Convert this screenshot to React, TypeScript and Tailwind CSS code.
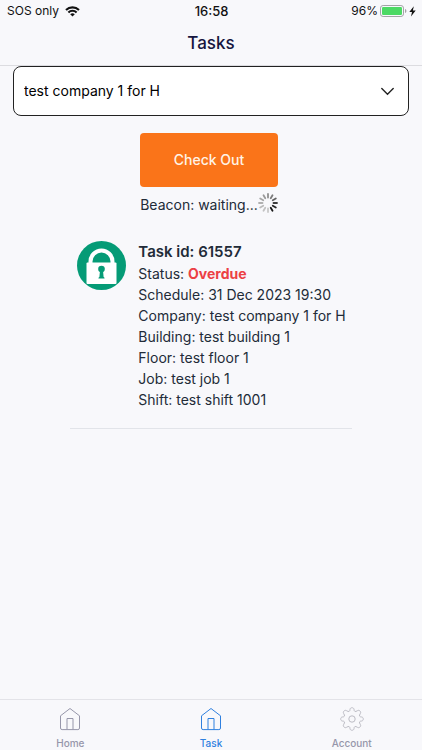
import type { ReactNode } from 'react'

interface Task {
  id: number
  status: string
  details: { label: string; value: string }[]
}

const companies = ['test company 1 for H']

const task: Task = {
  id: 61557,
  status: 'Overdue',
  details: [
    { label: 'Schedule', value: '31 Dec 2023 19:30' },
    { label: 'Company', value: 'test company 1 for H' },
    { label: 'Building', value: 'test building 1' },
    { label: 'Floor', value: 'test floor 1' },
    { label: 'Job', value: 'test job 1' },
    { label: 'Shift', value: 'test shift 1001' },
  ],
}

// Spoke colours, clockwise from the top.
const spokes = [
  '#8e8e8e', '#7c7c7c', '#626262', '#3c3c3c', '#242424', '#161616',
  '#c8c8c8', '#c2c2c2', '#bababa', '#b0b0b0', '#a6a6a6', '#9a9a9a',
]

function WifiIcon() {
  return (
    <svg width="15" height="11" viewBox="0 0 15 11" aria-hidden="true">
      <g fill="none" stroke="#111" strokeWidth="2.1">
        <path d="M1 4.1a9.2 9.2 0 0 1 13 0" />
        <path d="M3.4 6.5a5.8 5.8 0 0 1 8.2 0" />
      </g>
      <path d="M7.5 10.6 5.2 8.3a3.3 3.3 0 0 1 4.6 0z" fill="#111" />
    </svg>
  )
}

function BatteryIcon() {
  return (
    <svg width="27" height="12" viewBox="0 0 27 12" aria-hidden="true">
      <rect x="0.5" y="0.5" width="23" height="11" rx="2.6" fill="none" stroke="#a3a3a6" />
      <rect x="2" y="2" width="20" height="8" rx="1.2" fill="#4cd964" />
      <path d="M25 4v4c.9-.3 1.4-1.1 1.4-2S25.900 4.300 25 4z" fill="#a3a3a6" />
    </svg>
  )
}

function BoltIcon() {
  return (
    <svg width="7" height="11" viewBox="0 0 7 11" aria-hidden="true">
      <path d="M4.800.3.3 6h2.700L2 10.600 6.700 4.600H3.900z" fill="#111" />
    </svg>
  )
}

function Spinner() {
  return (
    <svg className="mb-1" width="20" height="20" viewBox="0 0 20 20" role="img" aria-label="Loading">
      {spokes.map((color, i) => (
        <line
          key={i}
          x1="10"
          y1="1"
          x2="10"
          y2="4.5"
          stroke={color}
          strokeWidth="1.8"
          strokeLinecap="round"
          transform={`rotate(${i * 30} 10 10)`}
        />
      ))}
    </svg>
  )
}

function LockIcon() {
  return (
    <svg className="shrink-0" width="49" height="49" viewBox="0 0 49 49" aria-hidden="true">
      <circle cx="24.5" cy="24.5" r="24.5" fill="#059b76" />
      <path d="M13.500 22.500v-2a11 11 0 0 1 22 0v2" fill="none" stroke="#fff" strokeWidth="4" />
      <rect x="9.500" y="21.500" width="30" height="21.500" rx="1" fill="#fff" />
      <circle cx="24.500" cy="28" r="3.300" fill="#059b76" />
      <path d="M23 29.500h3l.6 6.500q1 .3 1 1.500h-6.200q0-1.200 1-1.500z" fill="#059b76" />
    </svg>
  )
}

function HomeIcon() {
  return (
    <svg width="22" height="24" viewBox="0 0 22 24" fill="none" stroke="currentColor" aria-hidden="true">
      <path d="M1.500 8.800 11 1.500l9.500 7.300v12.200a1.600 1.600 0 0 1-1.600 1.600H3.100a1.600 1.600 0 0 1-1.600-1.600z" strokeLinejoin="round" />
      <path d="M8 22.500V11.500h6v11" />
    </svg>
  )
}

function GearIcon() {
  return (
    <svg width="24" height="24" viewBox="0 0 24 24" fill="none" stroke="#bcbcc4" strokeLinejoin="round" aria-hidden="true">
      <circle cx="12" cy="12" r="3.2" />
      <path d="M10 2.300C10.200 .2 13.800 .2 14 2.300C14.100 4.700 15.200 5.200 17.400 3.700C19.200 2.400 21.600 4.800 20.300 6.600C18.800 8.800 19.300 9.900 21.700 10C23.800 10.200 23.800 13.800 21.700 14C19.300 14.100 18.800 15.200 20.300 17.400C21.600 19.200 19.200 21.600 17.400 20.300C15.200 18.800 14.100 19.300 14 21.700C13.800 23.800 10.200 23.800 10 21.700C9.900 19.300 8.800 18.800 6.600 20.300C4.800 21.600 2.400 19.200 3.700 17.400C5.200 15.200 4.700 14.100 2.300 14C.2 13.800 .2 10.200 2.300 10C4.700 9.900 5.200 8.800 3.700 6.600C2.400 4.800 4.800 2.400 6.600 3.700C8.800 5.200 9.900 4.700 10 2.300Z" />
    </svg>
  )
}

function TabLink({ label, icon, active = false }: { label: string; icon: ReactNode; active?: boolean }) {
  return (
    <a
      href="#"
      aria-current={active ? 'page' : undefined}
      className={`flex flex-1 flex-col items-center text-[10px] leading-3 font-medium ${
        active ? 'text-[#2f80df]' : 'text-[#9696aa]'
      }`}
    >
      <span className="flex h-6 items-center">{icon}</span>
      <span className="mt-1.5">{label}</span>
    </a>
  )
}

export default function App() {
  return (
    <div className="flex min-h-screen flex-col bg-[#f8f8fb] font-['Inter',sans-serif] text-[#222b38]">
      {/* Status bar */}
      <div className="grid grid-cols-[1fr_auto_1fr] items-center pt-px pr-1.5 pl-[7px] text-xs leading-5 text-[#111]">
        <span className="flex items-center gap-1.5">
          SOS only <WifiIcon />
        </span>
        <span className="text-[13px] font-medium">16:58</span>
        <span className="flex items-center justify-end gap-0.5">
          96%
          <BatteryIcon />
          <BoltIcon />
        </span>
      </div>

      <header className="border-b border-[#dcdce0] py-2.5 text-center">
        <h1 className="text-[17px] leading-6 font-medium text-[#16163f]">Tasks</h1>
      </header>

      <main className="flex flex-1 flex-col items-center">
        <div className="relative w-full px-[13px]">
          <select
            aria-label="Company"
            className="h-[50px] w-full appearance-none rounded-lg border border-[#222] bg-white px-2.5 text-sm text-black"
          >
            {companies.map((c) => (
              <option key={c}>{c}</option>
            ))}
          </select>
          <svg
            className="pointer-events-none absolute top-5 right-7 text-[#222]"
            width="13"
            height="11"
            viewBox="0 0 13 11"
            fill="none"
            stroke="currentColor"
            strokeWidth="1.4"
            strokeLinecap="round"
            aria-hidden="true"
          >
            <path d="M.8 2.500 6.500 8.200l5.700-5.700" />
          </svg>
        </div>

        <div className="mt-[17px] mr-1 flex flex-col">
          <button className="h-[54px] rounded bg-[#fa7419] text-sm font-medium text-[#fff3e6]">Check Out</button>
          <p className="mt-1.5 flex items-center text-sm leading-6">
            Beacon: waiting...
            <Spinner />
          </p>
        </div>

        {/* Task card */}
        <section className="mt-6 flex w-2/3 gap-3 border-b border-[#e2e4e9] pb-[18px] pl-[7px] text-sm leading-[21px]">
          <LockIcon />
          <div className="whitespace-nowrap">
            <h2 className="text-[15px] leading-[22px] font-semibold">Task id: {task.id}</h2>
            <p>
              Status: <span className="font-bold text-[#ec4044]">{task.status}</span>
            </p>
            {task.details.map((d) => (
              <p key={d.label}>
                {d.label}: {d.value}
              </p>
            ))}
          </div>
        </section>
      </main>

      <nav className="flex border-t border-[#e3e3e8] pt-[7px] pb-px">
        <TabLink label="Home" icon={<HomeIcon />} />
        <TabLink label="Task" icon={<HomeIcon />} active />
        <TabLink label="Account" icon={<GearIcon />} />
      </nav>
    </div>
  )
}
